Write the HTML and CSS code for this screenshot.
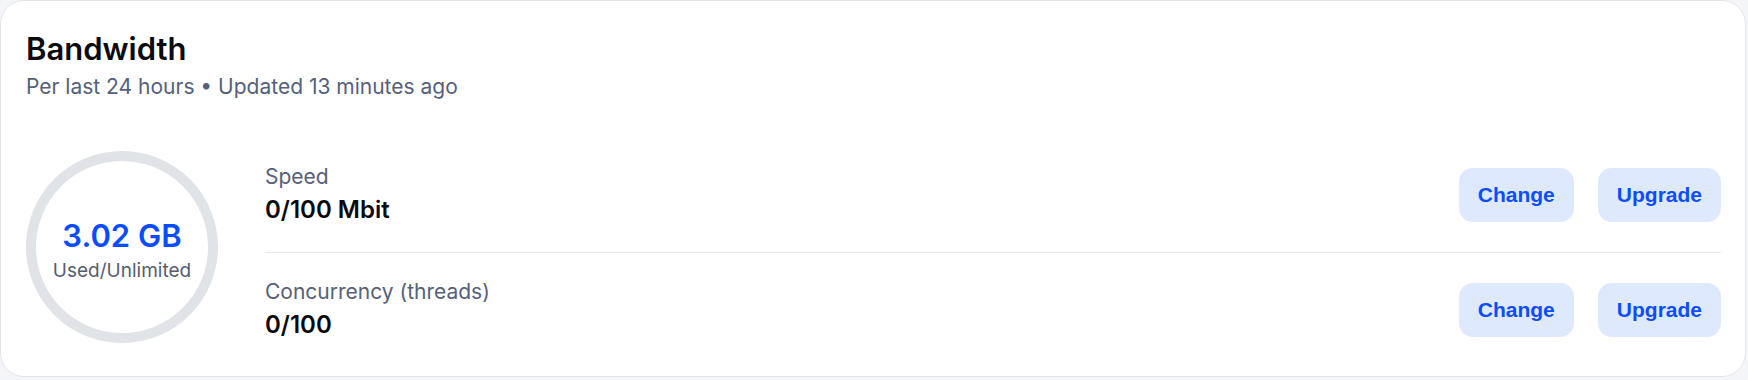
FILE: index.html
```html
<!DOCTYPE html>
<html lang="en">
<head>
<meta charset="UTF-8">
<meta name="viewport" content="width=device-width, initial-scale=1.0">
<title>Bandwidth</title>
<link rel="stylesheet" href="styles.css">
</head>
<body>

<!-- Tarjeta de ancho de banda -->
<div class="card">
    <div class="card-header">
        <h2 class="titulo">Bandwidth</h2>
        <p class="subtitulo">Per last 24 hours &bull; Updated 13 minutes ago</p>
    </div>

    <div class="contenido">
        <!-- Círculo de uso -->
        <div class="circulo">
            <div class="usado">3.02&nbsp;GB</div>
            <div class="limite">Used/Unlimited</div>
        </div>

        <!-- Filas de límites -->
        <div class="filas">
            <div class="fila">
                <div class="dato">
                    <div class="etiqueta">Speed</div>
                    <div class="valor">0/100 Mbit</div>
                </div>
                <div class="acciones">
                    <button class="boton">Change</button>
                    <button class="boton">Upgrade</button>
                </div>
            </div>
            <div class="fila">
                <div class="dato">
                    <div class="etiqueta">Concurrency (threads)</div>
                    <div class="valor">0/100</div>
                </div>
                <div class="acciones">
                    <button class="boton">Change</button>
                    <button class="boton">Upgrade</button>
                </div>
            </div>
        </div>
    </div>
</div>

</body>
</html>
```

FILE: styles.css
```css
body {
    margin: 0;
    padding: 0;
    background-color: #f4f5f8;
    font-family: "Inter", sans-serif;
}

.card {
    box-sizing: border-box;
    width: 1746px;
    height: 377px;
    padding: 29px 24px 0 25px;
    background-color: #fff;
    border: 1px solid #e3e5ea;
    border-radius: 24px;
}

.titulo {
    margin: 0;
    font-size: 31px;
    font-weight: 600;
    line-height: 38px;
    color: #0b0b0f;
}

.subtitulo {
    margin: 5px 0 0;
    font-size: 21px;
    line-height: 28px;
    color: #56607a;
}

.contenido {
    display: flex;
    align-items: flex-start;
    margin-top: 50px;
}

.circulo {
    box-sizing: border-box;
    flex: none;
    width: 192px;
    height: 192px;
    padding-top: 7px;
    border: 10px solid #e0e3e7;
    border-radius: 50%;
    display: flex;
    flex-direction: column;
    justify-content: center;
    align-items: center;
}

.usado {
    font-size: 31px;
    font-weight: 600;
    line-height: 36px;
    color: #0a4dff;
}

.limite {
    margin-top: 5px;
    font-size: 19px;
    line-height: 24px;
    color: #555e6e;
}

.filas {
    flex: 1;
    margin-left: 47px;
    margin-top: 17px;
}

.fila {
    display: flex;
    justify-content: space-between;
    align-items: center;
}

.fila + .fila {
    margin-top: 30px;
    padding-top: 30px;
    border-top: 1px solid #e4e6ea;
}

.etiqueta {
    font-size: 21px;
    line-height: 18px;
    color: #56607a;
}

.valor {
    margin-top: 11px;
    font-size: 24px;
    font-weight: 600;
    line-height: 25px;
    color: #0b0b0f;
}

.acciones {
    display: flex;
    gap: 24px;
}

.boton {
    height: 54px;
    padding: 0 19px;
    font-family: "Liberation Sans", Arial, sans-serif;
    font-size: 21px;
    font-weight: bold;
    color: #0d4dff;
    background-color: #dfe9fd;
    border: none;
    border-radius: 14px;
    cursor: pointer;
}
```
